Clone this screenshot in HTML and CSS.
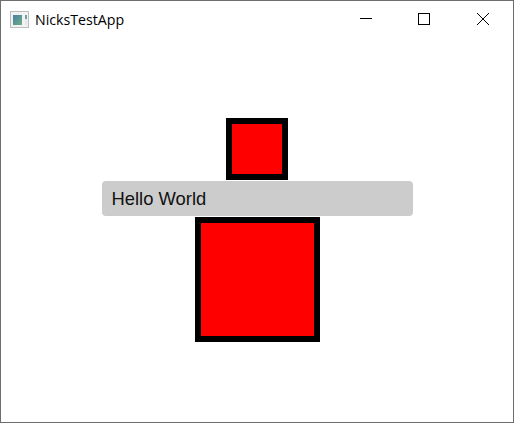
FILE: index.html
```html
<!DOCTYPE html>
<html lang="en">
<head>
    <meta charset="UTF-8">
    <meta name="viewport" content="width=device-width, initial-scale=1.0">
    <title>NicksTestApp</title>
    <link rel="stylesheet" href="styles.css">
</head>
<body>
    <div class="window">
        <div class="titlebar">
            <svg class="app-icon" width="19" height="17" viewBox="0 0 19 17">
                <defs>
                    <linearGradient id="iconFill" x1="0" y1="0" x2="1" y2="1">
                        <stop offset="0" stop-color="#4a7fa8"/>
                        <stop offset="1" stop-color="#6fae84"/>
                    </linearGradient>
                </defs>
                <rect x="0.5" y="0.5" width="18" height="16" fill="#f2f2f2" stroke="#bdbdbd"/>
                <rect x="3" y="4" width="9" height="10" fill="url(#iconFill)"/>
                <rect x="15" y="4" width="2" height="4" fill="#6aa59a"/>
                <rect x="15" y="8" width="2" height="6" fill="#e3e9e6"/>
            </svg>
            <span class="app-title">NicksTestApp</span>
            <div class="controls">
                <div class="control">
                    <svg width="12" height="12" viewBox="0 0 12 12"><path d="M0 5.5H12" stroke="#000" fill="none"/></svg>
                </div>
                <div class="control">
                    <svg width="12" height="12" viewBox="0 0 12 12"><rect x="0.5" y="0.5" width="11" height="11" stroke="#000" fill="none"/></svg>
                </div>
                <div class="control control-close">
                    <svg width="12" height="12" viewBox="0 0 12 12"><path d="M0 0L12 12M12 0L0 12" stroke="#000" fill="none"/></svg>
                </div>
            </div>
        </div>
        <div class="content">
            <div class="box box-small"></div>
            <div class="label">Hello World</div>
            <div class="box box-large"></div>
        </div>
    </div>
</body>
</html>
```

FILE: styles.css
```css
html, body {
    margin: 0;
    padding: 0;
    background-color: #FFFFFF;
}
.window {
    width: 514px;
    height: 423px;
    box-sizing: border-box;
    border: 1px solid #6e6e6e;
    display: flex;
    flex-direction: column;
    overflow: hidden;
}
.titlebar {
    height: 37px;
    display: flex;
    align-items: center;
    padding-left: 9px;
    font-family: "Open Sans", sans-serif;
    font-size: 14.2px;
    color: #000000;
}
.app-icon {
    margin-right: 6px;
}
.controls {
    margin-left: auto;
    display: flex;
}
.control {
    width: 58px;
    height: 37px;
    padding-top: 12px;
    box-sizing: border-box;
    display: flex;
    justify-content: center;
}
.control-close {
    width: 60px;
}
.content {
    flex: 1;
    display: flex;
    flex-direction: column;
    align-items: center;
    justify-content: center;
}
.box {
    box-sizing: border-box;
    background-color: #FF0000;
    border: 6px solid #000000;
}
.box-small {
    width: 62px;
    height: 62px;
}
.box-large {
    width: 125px;
    height: 125px;
}
.label {
    width: 311px;
    height: 35px;
    margin: 1px 0;
    padding-left: 10px;
    box-sizing: border-box;
    display: flex;
    align-items: center;
    background-color: #CCCCCC;
    border-radius: 4px;
    font-family: "Liberation Sans", Arial, sans-serif;
    font-size: 18.4px;
    color: #111111;
}
```
